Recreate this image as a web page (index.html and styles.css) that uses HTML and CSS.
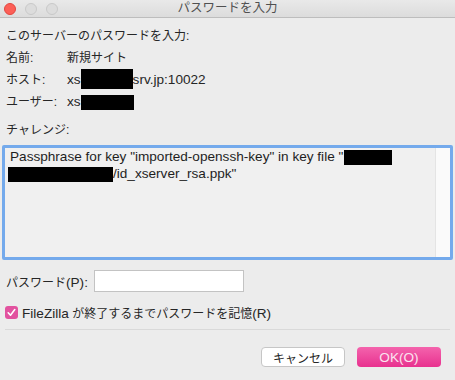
FILE: index.html
```html
<!DOCTYPE html>
<html lang="ja">
<head>
    <meta charset="UTF-8">
    <title>パスワードを入力</title>
    <link rel="stylesheet" href="styles.css">
</head>
<body>
    <div class="window">
        <div class="titlebar">
            <div class="lights">
                <span class="light red"></span>
                <span class="light"></span>
                <span class="light"></span>
            </div>
            <div class="title">パスワードを入力</div>
        </div>

        <div class="content">
            <div class="row">このサーバーのパスワードを入力:</div>
            <div class="row info">
                <span class="label">名前:</span>
                <span>新規サイト</span>
            </div>
            <div class="row info">
                <span class="label">ホスト:</span>
                <span class="en">xs<span class="redact host-box"></span>srv.jp:10022</span>
            </div>
            <div class="row info">
                <span class="label">ユーザー:</span>
                <span class="en">xs<span class="redact user-box"></span></span>
            </div>
            <div class="row challenge-label">チャレンジ:</div>
        </div>

        <div class="challenge">
            <div class="challenge-text en">
                <div>Passphrase for key "imported-openssh-key" in key file "<span class="redact path-box1"></span></div>
                <div><span class="redact path-box2"></span>/id_xserver_rsa.ppk"</div>
            </div>
            <div class="scroll-track"></div>
        </div>

        <div class="content">
            <div class="password-row">
                <span class="pw-label">パスワード<span class="en">(P):</span></span>
                <div class="pw-input"></div>
            </div>
            <div class="check-row">
                <svg class="checkbox" width="13" height="13" viewBox="0 0 13 13">
                    <rect x="0" y="0" width="13" height="13" rx="3" fill="#e2529f"/>
                    <path d="M3.2 6.8 L5.5 9.2 L9.8 3.6" fill="none" stroke="#fff" stroke-width="1.6" stroke-linecap="round" stroke-linejoin="round"/>
                </svg>
                <span><span class="en">FileZilla</span> が終了するまでパスワードを記憶<span class="en">(R)</span></span>
            </div>
        </div>

        <div class="separator"></div>

        <div class="buttons">
            <div class="btn cancel">キャンセル</div>
            <div class="btn ok en">OK(O)</div>
        </div>
    </div>
</body>
</html>
```

FILE: styles.css
```css
body {
    margin: 0;
    background: #ececec;
    font-family: 'Liberation Sans', 'Noto Sans CJK JP', sans-serif;
    font-size: 12px;
    color: #262626;
}

.en {
    font-size: 13.6px;
}

.window {
    width: 455px;
    height: 380px;
    background: #ececec;
}

.titlebar {
    position: relative;
    height: 17px;
    background: linear-gradient(#e9e9e9, #dcdcdc);
    border-bottom: 1px solid #bdbdbd;
    display: flex;
    align-items: center;
    justify-content: center;
}

.lights {
    position: absolute;
    left: 4px;
    top: 3px;
    display: flex;
    gap: 9px;
}

.light {
    width: 10px;
    height: 10px;
    border-radius: 50%;
    background: #dcdcdc;
    border: 1px solid #c9c9c9;
}

.light.red {
    background: #fc5f57;
    border-color: #e2463f;
}

.title {
    color: #505050;
    font-size: 12.5px;
    line-height: 17px;
}

.content {
    padding: 0 6px;
}

.row {
    height: 22px;
    line-height: 22px;
    white-space: nowrap;
}

.content > .row:first-child {
    margin-top: 7px;
}

.info {
    display: flex;
    align-items: center;
}

.label {
    width: 61px;
}

.challenge-label {
    margin-top: 6px;
}

.redact {
    display: inline-block;
    background: #000;
    vertical-align: middle;
}

.host-box {
    width: 52px;
    height: 20px;
    margin-top: -3px;
}

.user-box {
    width: 53px;
    height: 15px;
}

.challenge {
    margin: 4px 2px 0 2px;
    height: 109px;
    border: 3px solid #74aaec;
    border-radius: 2px;
    background: #f0f0f0;
    display: flex;
}

.challenge-text {
    flex: 1;
    padding: 0 0 0 5px;
    line-height: 17px;
    color: #1e1e1e;
    white-space: nowrap;
}

.path-box1 {
    width: 48px;
    height: 15px;
    margin-left: 1px;
}

.path-box2 {
    width: 105px;
    height: 15px;
    margin-left: -2px;
}

.scroll-track {
    width: 14px;
    background: #fafafa;
    border-left: 1px solid #e4e4e4;
}

.password-row {
    display: flex;
    align-items: center;
    margin-top: 10px;
    height: 22px;
}

.pw-label {
    width: 88px;
    white-space: nowrap;
}

.pw-input {
    width: 148px;
    height: 20px;
    background: #fff;
    border: 1px solid #c3c3c3;
}

.check-row {
    display: flex;
    align-items: center;
    gap: 4px;
    margin-top: 10px;
    height: 20px;
}

.checkbox {
    flex-shrink: 0;
    margin-left: -1px;
}

.separator {
    margin: 7px 5px 0 5px;
    border-top: 1px solid #d9d9d9;
}

.buttons {
    display: flex;
    justify-content: flex-end;
    gap: 12px;
    padding: 17px 14px 0 0;
}

.btn {
    width: 84px;
    height: 20px;
    box-sizing: border-box;
    border-radius: 4px;
    display: flex;
    align-items: center;
    justify-content: center;
    font-size: 12px;
}

.cancel {
    background: #fff;
    border: 1px solid #c6c6c6;
    color: #262626;
}

.ok {
    background: linear-gradient(#f463ad, #e8318f);
    color: #fbe3ef;
    font-size: 13.6px;
}
```
